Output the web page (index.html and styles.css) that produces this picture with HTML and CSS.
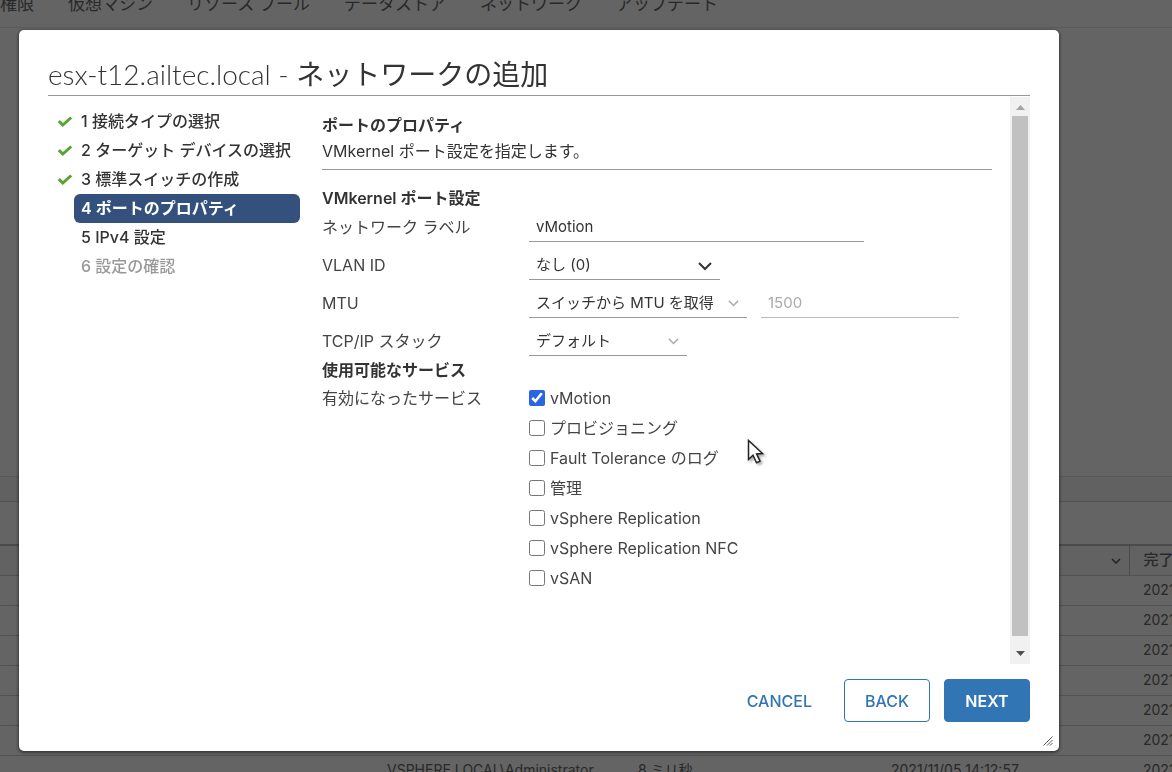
FILE: index.html
```html
<!DOCTYPE html>
<html lang="ja">
<head>
<meta charset="utf-8">
<meta name="viewport" content="width=device-width, initial-scale=1">
<title>ネットワークの追加</title>
<link rel="stylesheet" href="styles.css">
</head>
<body>
<div class="page">
  <nav class="tabs">
    <span>権限</span><span>仮想マシン</span><span>リソース プール</span><span>データストア</span><span>ネットワーク</span><span>アップデート</span>
  </nav>
  <div class="panel"></div>
  <div class="splitter"></div>
  <div class="taskbar"></div>
  <table class="tasks">
    <colgroup><col class="col-name"><col class="col-user"><col class="col-wait"><col class="col-start"><col></colgroup>
    <thead>
      <tr><th></th><th></th><th></th><th class="sortable"><svg class="th-chevron" viewBox="0 0 10 6"><path d="M1 1l4 4 4-4"/></svg></th><th>完了時刻</th></tr>
    </thead>
    <tbody>
      <tr><td></td><td></td><td></td><td></td><td>2021/11/05</td></tr>
      <tr><td></td><td></td><td></td><td></td><td>2021/11/05</td></tr>
      <tr><td></td><td></td><td></td><td></td><td>2021/11/05</td></tr>
      <tr><td></td><td></td><td></td><td></td><td>2021/11/05</td></tr>
      <tr><td></td><td></td><td></td><td></td><td>2021/11/05</td></tr>
      <tr><td></td><td></td><td></td><td></td><td>2021/11/05</td></tr>
      <tr><td></td><td>VSPHERE.LOCAL\Administrator</td><td>8 ミリ秒</td><td>2021/11/05 14:12:57</td><td>2021/11/05</td></tr>
    </tbody>
  </table>
</div>

<div class="backdrop">
  <section class="dialog" role="dialog" aria-labelledby="dialog-title">
    <header class="dialog-header"><h1 id="dialog-title"><span class="host">esx-t12.ailtec.local - </span>ネットワークの追加</h1></header>
    <div class="dialog-body">
      <ol class="steps">
        <li class="step"><svg class="check" viewBox="0 0 16 12"><path d="M1.800 5.200l4 3.800L14.200 1.500"/></svg><span class="step-label">1 接続タイプの選択</span></li>
        <li class="step"><svg class="check" viewBox="0 0 16 12"><path d="M1.800 5.200l4 3.800L14.200 1.500"/></svg><span class="step-label">2 ターゲット デバイスの選択</span></li>
        <li class="step"><svg class="check" viewBox="0 0 16 12"><path d="M1.800 5.200l4 3.800L14.200 1.500"/></svg><span class="step-label">3 標準スイッチの作成</span></li>
        <li class="step active" aria-current="step"><span class="step-label">4 ポートのプロパティ</span></li>
        <li class="step"><span class="step-label">5 IPv4 設定</span></li>
        <li class="step disabled"><span class="step-label">6 設定の確認</span></li>
      </ol>
      <form class="content">
        <div class="intro">
          <h2>ポートのプロパティ</h2>
          <p>VMkernel ポート設定を指定します。</p>
        </div>
        <h3>VMkernel ポート設定</h3>
        <div class="row">
          <label for="net-label">ネットワーク ラベル</label>
          <input class="field field-label" id="net-label" type="text" value="vMotion">
        </div>
        <div class="row">
          <label for="vlan">VLAN ID</label>
          <div class="select select-vlan"><select class="field" id="vlan"><option>なし (0)</option></select><svg class="chevron" viewBox="0 0 14 9"><path d="M1 1l6 6 6-6"/></svg></div>
        </div>
        <div class="row">
          <label for="mtu-mode">MTU</label>
          <div class="pair">
            <div class="select select-mtu"><select class="field" id="mtu-mode"><option>スイッチから MTU を取得</option></select><svg class="chevron light" viewBox="0 0 14 9"><path d="M1 1l6 6 6-6"/></svg></div>
            <input class="field field-mtu" type="text" value="1500" aria-label="MTU" disabled>
          </div>
        </div>
        <div class="row">
          <label for="stack">TCP/IP スタック</label>
          <div class="select select-stack"><select class="field" id="stack"><option>デフォルト</option></select><svg class="chevron light" viewBox="0 0 14 9"><path d="M1 1l6 6 6-6"/></svg></div>
        </div>
        <h3>使用可能なサービス</h3>
        <div class="row services-row">
          <span class="services-title" id="services">有効になったサービス</span>
          <div class="services" role="group" aria-labelledby="services">
            <label class="service"><input type="checkbox" checked>vMotion</label>
            <label class="service"><input type="checkbox">プロビジョニング</label>
            <label class="service"><input type="checkbox">Fault Tolerance のログ</label>
            <label class="service"><input type="checkbox">管理</label>
            <label class="service"><input type="checkbox">vSphere Replication</label>
            <label class="service"><input type="checkbox">vSphere Replication NFC</label>
            <label class="service"><input type="checkbox">vSAN</label>
          </div>
        </div>
      </form>
      <div class="scrollbar" aria-hidden="true">
        <svg class="arrow up" viewBox="0 0 9 5"><path d="M0 5L4.500 0 9 5z"/></svg>
        <div class="thumb"></div>
        <svg class="arrow down" viewBox="0 0 9 5"><path d="M0 0h9L4.500 5z"/></svg>
      </div>
    </div>
    <footer class="dialog-footer">
      <button class="btn btn-link" type="button">CANCEL</button>
      <button class="btn btn-outline" type="button">BACK</button>
      <button class="btn btn-primary" type="button">NEXT</button>
    </footer>
    <svg class="grip" viewBox="0 0 10 10"><path d="M0.500 9.500l9-9M4 9.500L9.500 4M7 9.500L9.500 7"/></svg>
  </section>
</div>
<svg class="pointer" viewBox="0 0 18 27"><path d="M1.500 1.500v19l4.500-4.200 3.500 7.500 3.500-1.600-3.400-7.300 5.900-.4z"/></svg>
</body>
</html>
```
FILE: styles.css
```css
* { box-sizing: border-box; }
body {
  margin: 0;
  height: 100vh;
  overflow: hidden;
  background: #fafafa;
  color: #333;
  font: 16px/20px Inter, "Noto Sans CJK JP", sans-serif;
}
h1, h2, h3, p, ol { margin: 0; padding: 0; }

/* Page behind the dialog */
.page { height: 100vh; display: flex; flex-direction: column; overflow: hidden; color: #666; }
.tabs { display: flex; gap: 34px; height: 28px; padding-bottom: 11px; align-items: flex-end; font-size: 17px; line-height: 24px; border-bottom: 1px solid #e0e0e0; white-space: nowrap; }
.panel { flex: 0 0 449px; border-bottom: 1px solid #ddd; }
.splitter { flex: 0 0 25px; background: #f2f2f2; border-bottom: 1px solid #ccc; }
.taskbar { flex: 0 0 42px; }
.tasks { width: 100%; table-layout: fixed; border-collapse: collapse; border-top: 2px solid #bbb; }
.tasks tr { height: 30px; }
.tasks th, .tasks td { height: 30px; padding: 0 8px; border-bottom: 1px solid #ccc; text-align: left; line-height: 20px; white-space: nowrap; overflow: hidden; }
.tasks td { font-size: 14px; }
.tasks th { background: #f5f5f5; font-size: 15px; font-weight: 500; padding-left: 14px; }
.tasks td:last-child { padding-left: 14px; }
.tasks .sortable { text-align: right; border-right: 1px solid #bbb; }
.col-name { width: 379px; }
.col-user { width: 251px; }
.col-wait { width: 253px; }
.col-start { width: 246px; }
.th-chevron { width: 10px; height: 6px; fill: none; stroke: #555; stroke-width: 1.500; vertical-align: middle; }

/* Dialog */
.backdrop { position: fixed; inset: 0; display: flex; padding: 30px 113px 21px 19px; background: rgba(0, 0, 0, .6); }
.dialog { position: relative; flex: 1; min-width: 0; display: flex; flex-direction: column; padding: 0 29px; background: #fff; border-radius: 5px; box-shadow: 0 1px 3px 1px rgba(0, 0, 0, .45); }
.dialog-header { height: 66px; padding-top: 26px; border-bottom: 1px solid #999; }
.dialog-header h1 { font-size: 28px; line-height: 36px; font-weight: 400; white-space: nowrap; }
.host { font-family: Lato, sans-serif; font-weight: 300; }
.dialog-body { flex: 1; min-height: 0; display: flex; padding-top: 1px; }
.dialog-footer { display: flex; justify-content: flex-end; gap: 14px; padding: 15px 0 29px; }

.steps { flex: 0 0 252px; padding: 10px 0 0 9px; list-style: none; font-weight: 500; }
.step { display: grid; grid-template-columns: 17px 1fr; align-items: center; height: 29px; }
.step-label { grid-column: 2; padding: 4px 7px 5px; border-radius: 6px; white-space: nowrap; }
.check { width: 16px; height: 12px; fill: none; stroke: #55a532; stroke-width: 3; }
.active .step-label { background: #34507c; color: #fff; font-weight: 600; }
.disabled { color: #999; }

.content { flex: 1; min-width: 0; margin: 15px 18px 0 22px; }
.intro { padding-bottom: 5px; margin-bottom: 18px; border-bottom: 1px solid #999; line-height: 26px; }
h2, h3 { font-size: 16px; font-weight: 600; }
h2 { line-height: 26px; }
h3 { line-height: 20px; }
.row { display: grid; grid-template-columns: 207px 1fr; align-items: center; min-height: 38px; color: #444; }
.field { width: 100%; height: 30px; padding: 0 7px; border: 0; border-bottom: 1px solid #999; border-radius: 0; background: transparent; color: #333; font: inherit; font-size: 15px; appearance: none; outline: 0; }
.field-label { width: 335px; }
.pair { display: flex; gap: 14px; }
.field-mtu { width: 198px; }
.field:disabled { color: #aaa; border-color: #bbb; }
.select { position: relative; }
.select-vlan { width: 191px; }
.select-mtu { width: 218px; }
.select-stack { width: 158px; }
.chevron { position: absolute; right: 8px; top: 12px; width: 14px; height: 9px; fill: none; stroke: #333; stroke-width: 2; pointer-events: none; }
.chevron.light { width: 11px; height: 7px; stroke: #aaa; }
.services-row { align-items: start; padding-top: 3px; }
.services-title { line-height: 30px; }
.service { display: flex; align-items: center; gap: 5px; height: 30px; }
.service input { width: 16px; height: 16px; margin: 0; accent-color: #2a66e0; }

.scrollbar { flex: 0 0 20px; display: flex; flex-direction: column; align-items: center; background: #f1f1f1; }
.thumb { flex: 1; width: 16px; background: #c1c1c1; }
.arrow { width: 9px; height: 5px; }
.up { margin: 8px 0 6px; fill: #a3a3a3; }
.down { margin: 15px 0 8px; fill: #505050; }

.btn { height: 43px; min-width: 86px; padding: 0 17px; border: 1px solid #3175b5; border-radius: 4px; background: #fff; color: #3175b5; font: 500 16px/20px Inter, sans-serif; }
.btn-link { border-color: transparent; }
.btn-primary { background: #3175b5; color: #fff; font-weight: 600; }
.grip { position: absolute; right: 6px; bottom: 5px; width: 10px; height: 10px; stroke: #555; stroke-width: 1; }
.pointer { position: fixed; left: 747px; top: 439px; width: 18px; height: 27px; fill: #fff; stroke: #222; stroke-width: 1.500; filter: drop-shadow(2px 2px 1px rgba(0, 0, 0, .3)); pointer-events: none; }
```
